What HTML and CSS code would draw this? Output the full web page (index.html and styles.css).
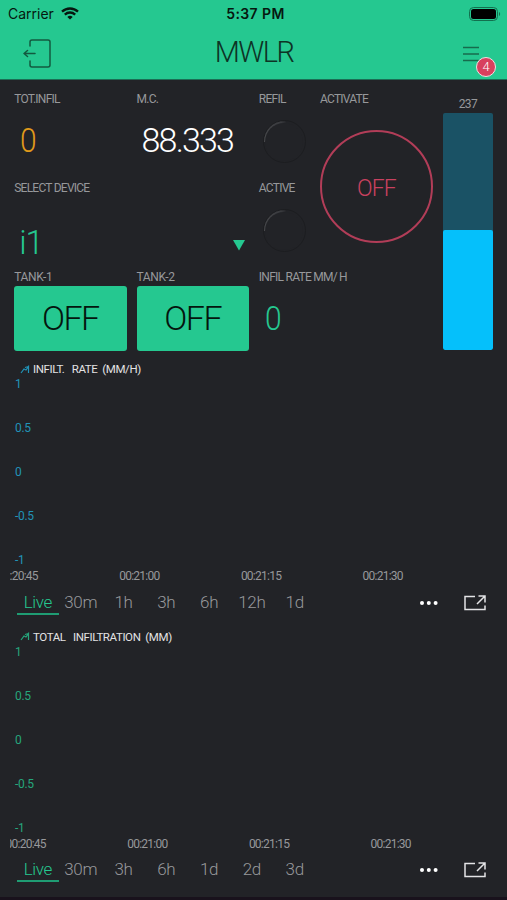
FILE: index.html
```html
<!DOCTYPE html>
<html lang="en">
<head>
    <meta charset="UTF-8">
    <meta name="viewport" content="width=device-width, initial-scale=1.0">
    <title>MWLR</title>
    <link rel="stylesheet" href="styles.css">
</head>
<body>
    <header>
        <div class="status-bar">
            <div class="carrier">
                <span>Carrier</span>
                <svg width="18" height="13" viewBox="0 0 18 13" fill="none" stroke="#06170f" stroke-width="2.3">
                    <path d="M1 4.7C5.5.4 12.5.4 17 4.7"></path>
                    <path d="M3.8 7.6c3-2.8 7.4-2.8 10.4 0"></path>
                    <path d="M6.3 9.9c1.7-1.4 3.7-1.4 5.4 0L9 12.6z" fill="#06170f" stroke="none"></path>
                </svg>
            </div>
            <div class="clock">5:37 PM</div>
            <svg class="battery" width="32" height="14" viewBox="0 0 32 14">
                <rect x=".5" y=".5" width="28" height="13" rx="4" fill="none" stroke="#13704e"></rect>
                <rect x="2" y="2" width="25" height="10" rx="2.5" fill="#000"></rect>
                <path d="M30 5v4c1.5-.5 1.5-3.5 0-4z" fill="#13704e"></path>
            </svg>
        </div>
        <div class="nav-bar">
            <svg class="exit" width="28" height="30" viewBox="0 0 28 30" fill="none" stroke="#13593f" stroke-width="1.5" stroke-linecap="round" stroke-linejoin="round">
                <path d="M7 7V3q0-2 2-2h16q2 0 2 2v23q0 2-2 2H9q-2 0-2-2v-4"></path>
                <path d="M12 14.500H1M4.500 11.500L1 14.500l3.500 3"></path>
            </svg>
            <h1>MWLR</h1>
            <div class="menu">
                <svg width="16" height="16" viewBox="0 0 16 16" stroke="#176b4c" stroke-width="1.6">
                    <path d="M0 1.500h16M0 8h16M0 14.500h16"></path>
                </svg>
                <span class="badge">4</span>
            </div>
        </div>
    </header>

    <main>
        <section class="widgets">
            <div class="widget w2">
                <h2>TOT.INFIL</h2>
                <div class="value orange"><span>0</span></div>
            </div>
            <div class="widget w2">
                <h2>M.C.</h2>
                <div class="value white">88.333</div>
            </div>
            <div class="widget w1">
                <h2>REFIL</h2>
                <div class="led"></div>
            </div>
            <div class="widget w2 tall">
                <h2>ACTIVATE</h2>
                <div class="round-button">OFF</div>
            </div>
            <div class="widget level">
                <div class="level-value">237</div>
                <div class="level-bar"><div class="level-fill"></div></div>
            </div>
            <div class="widget w4">
                <h2>SELECT DEVICE</h2>
                <div class="select">
                    <span>i1</span>
                    <svg width="12" height="11" viewBox="0 0 12 11"><path d="M0 0h12L6 10.500z" fill="#25c890"></path></svg>
                </div>
            </div>
            <div class="widget w1">
                <h2>ACTIVE</h2>
                <div class="led"></div>
            </div>
            <div class="widget w2">
                <h2 class="wide">TANK-1</h2>
                <div class="button">OFF</div>
            </div>
            <div class="widget w2">
                <h2 class="wide">TANK-2</h2>
                <div class="button">OFF</div>
            </div>
            <div class="widget w3">
                <h2>INFIL RATE MM/ H</h2>
                <div class="value green"><span>0</span></div>
            </div>
        </section>

        <section class="chart blue">
            <div class="legend">
                <svg width="10" height="9" viewBox="0 0 10 9" fill="none" stroke="currentColor" stroke-width="1.2"><path d="M1 8l3-4 2 1 2.500-3.500v6.500M5 2.500l3.500-1"></path></svg>
                <span>INFILT. &nbsp; RATE &nbsp;(MM/H)</span>
            </div>
            <div class="y-axis">
                <span>1</span><span>0.5</span><span>0</span><span>-0.5</span><span>-1</span>
            </div>
            <div class="x-axis">
                <span>00:20:45</span><span>00:21:00</span><span>00:21:15</span><span>00:21:30</span>
            </div>
            <div class="toolbar">
                <div class="tabs">
                    <span class="active">Live</span><span>30m</span><span>1h</span><span>3h</span><span>6h</span><span>12h</span><span>1d</span>
                </div>
                <svg class="dots" width="18" height="4" viewBox="0 0 18 4" fill="#fff"><circle cx="2" cy="2" r="2"></circle><circle cx="8.800" cy="2" r="2"></circle><circle cx="15.600" cy="2" r="2"></circle></svg>
                <svg class="expand" width="22" height="16" viewBox="0 0 22 16" fill="none" stroke="#e4e4e6" stroke-width="1.5"><path d="M11 1.500H1v13h20v-4M13 9l7.500-7.500M14.500 1H21v6.500"></path></svg>
            </div>
        </section>

        <section class="chart teal">
            <div class="legend">
                <svg width="10" height="9" viewBox="0 0 10 9" fill="none" stroke="currentColor" stroke-width="1.2"><path d="M1 8l3-4 2 1 2.500-3.500v6.500M5 2.500l3.500-1"></path></svg>
                <span>TOTAL &nbsp; INFILTRATION &nbsp;(MM)</span>
            </div>
            <div class="y-axis">
                <span>1</span><span>0.5</span><span>0</span><span>-0.5</span><span>-1</span>
            </div>
            <div class="x-axis later">
                <span>00:20:45</span><span>00:21:00</span><span>00:21:15</span><span>00:21:30</span>
            </div>
            <div class="toolbar">
                <div class="tabs">
                    <span class="active">Live</span><span>30m</span><span>3h</span><span>6h</span><span>1d</span><span>2d</span><span>3d</span>
                </div>
                <svg class="dots" width="18" height="4" viewBox="0 0 18 4" fill="#fff"><circle cx="2" cy="2" r="2"></circle><circle cx="8.800" cy="2" r="2"></circle><circle cx="15.600" cy="2" r="2"></circle></svg>
                <svg class="expand" width="22" height="16" viewBox="0 0 22 16" fill="none" stroke="#e4e4e6" stroke-width="1.5"><path d="M11 1.500H1v13h20v-4M13 9l7.500-7.500M14.500 1H21v6.500"></path></svg>
            </div>
        </section>
    </main>
</body>
</html>
```
FILE: styles.css
```css
:root {
    --green: #25c890;
    --bg: #222327;
    --label: #97989b;
    --red: #c8415f;
}

* {
    margin: 0;
    padding: 0;
    box-sizing: border-box;
}

body {
    font-family: Roboto, sans-serif;
    font-weight: 300;
    background: var(--bg);
    color: var(--label);
    height: 900px;
    overflow: hidden;
    border-bottom: 3px solid #19121c;
}

svg {
    display: block;
    flex: none;
}

header {
    height: 80px;
    background: var(--green);
    border-bottom: 1px solid #1b6f55;
}

.status-bar {
    height: 27px;
    display: grid;
    grid-template-columns: 1fr auto 1fr;
    align-items: center;
    padding: 0 6px 0 8px;
    font-family: Inter, sans-serif;
    color: #06170f;
}

.carrier {
    display: flex;
    align-items: center;
    gap: 7px;
    font-size: 14px;
    font-weight: 400;
}

.clock {
    font-size: 14px;
    font-weight: 600;
    letter-spacing: 0.4px;
    padding-left: 2px;
}

.battery {
    justify-self: end;
}

.nav-bar {
    height: 52px;
    display: grid;
    grid-template-columns: 1fr auto 1fr;
    align-items: center;
    padding: 2px 28px 0 23px;
}

h1 {
    font-size: 29px;
    line-height: 34px;
    font-weight: 300;
    letter-spacing: -1.6px;
    color: #0d3325;
    padding: 0 0 4px 6px;
}

.menu {
    justify-self: end;
    position: relative;
}

.badge {
    position: absolute;
    left: 13px;
    top: 11px;
    width: 20px;
    height: 20px;
    border: 1.5px solid #f2dfe3;
    border-radius: 50%;
    background: #d8405e;
    color: #fff;
    font-size: 13px;
    line-height: 18px;
    text-align: center;
}

.widgets {
    display: grid;
    grid-template-columns: repeat(8, 1fr);
    grid-template-rows: 77px 77px 81px;
    gap: 12px 10px;
    padding: 11px 13.5px 0 14.2px;
}

.w1 { grid-column: span 1; }
.w2 { grid-column: span 2; }
.w3 { grid-column: span 3; }
.w4 { grid-column: span 4; }

.widget {
    min-width: 0;
    display: flex;
    flex-direction: column;
    white-space: nowrap;
}

.tall {
    grid-row: span 2;
}

.level {
    grid-column: 8;
    grid-row: 1 / span 3;
    padding: 0 1px;
}

h2 {
    font-size: 12px;
    line-height: 16px;
    font-weight: 400;
    letter-spacing: -0.75px;
}

h2.wide {
    letter-spacing: -0.35px;
}

.value {
    font-size: 34px;
    line-height: 40px;
    padding: 13px 0 0 5px;
    letter-spacing: -1.8px;
}

/* single digits are drawn condensed */
.value span {
    display: inline-block;
    transform: scaleX(0.88);
}

.orange { color: #e09a1b; }
.white { color: #fff; }
.green { color: var(--green); }

.led {
    width: 43px;
    height: 43px;
    margin: 13px 0 0 4px;
    border-radius: 50%;
    border: 1px solid #1c1d20;
    background: conic-gradient(from 270deg, #48494c, #3a3b3f 80deg, transparent 95deg);
    display: grid;
    place-items: center;
}

.led::before {
    content: "";
    width: 38px;
    height: 38px;
    border-radius: 50%;
    background: var(--bg);
}

.round-button {
    width: 113px;
    height: 113px;
    margin-top: 23px;
    border: 2px solid #b23d58;
    border-radius: 50%;
    color: var(--red);
    font-size: 23px;
    line-height: 114px;
    text-align: center;
    letter-spacing: -0.9px;
}

.level-value {
    font-size: 12px;
    line-height: 14px;
    font-weight: 400;
    letter-spacing: -0.6px;
    padding: 6px 0 2px;
    text-align: center;
}

.level-bar {
    flex: 1;
    display: flex;
    align-items: flex-end;
    background: #1a5265;
    border-radius: 2px;
    overflow: hidden;
}

.level-fill {
    width: 100%;
    height: 50.5%;
    background: #05c0fb;
    border-radius: 2px;
}

.select {
    display: flex;
    align-items: center;
    justify-content: space-between;
    padding: 28px 4px 0 5px;
    color: var(--green);
    font-size: 33px;
    line-height: 38px;
}

.select span {
    letter-spacing: -1px;
}

.select svg {
    margin-top: 5px;
}

.button {
    flex: 1;
    margin-top: 1px;
    background: var(--green);
    border-radius: 3px;
    color: #04150e;
    font-size: 34px;
    line-height: 65px;
    text-align: center;
    letter-spacing: -1.5px;
}

.chart {
    height: 267.5px;
    padding: 11px 0 0 10px;
}

.blue { color: #2193b8; }
.teal { color: #26a67c; }

.legend {
    display: flex;
    align-items: center;
    gap: 3px;
    height: 16px;
    padding-left: 10px;
}

.legend span {
    color: #e2e2e3;
    font-size: 11.5px;
    font-weight: 400;
    letter-spacing: -0.4px;
}

.y-axis {
    height: 190px;
    display: flex;
    flex-direction: column;
    justify-content: space-between;
    padding-left: 5px;
    font-size: 12px;
    line-height: 14px;
    font-weight: 400;
    letter-spacing: -0.3px;
}

.x-axis {
    display: flex;
    gap: 80.7px;
    overflow: hidden;
    color: var(--label);
    font-size: 12px;
    line-height: 18px;
    font-weight: 400;
    letter-spacing: -0.75px;
}

.x-axis span {
    flex: none;
    width: 41px;
    white-space: nowrap;
}

.x-axis span:first-child {
    margin-left: -12.5px;
}

.x-axis.later span:first-child {
    margin-left: -4.5px;
}

.toolbar {
    display: flex;
    align-items: center;
    height: 32px;
    padding: 0 21px 0 6.5px;
}

.tabs {
    display: flex;
    flex: 1;
    color: var(--label);
    font-size: 17px;
    line-height: 22px;
    letter-spacing: -0.3px;
    padding-top: 3px;
}

.tabs span {
    width: 42.8px;
    text-align: center;
    border-bottom: 2px solid transparent;
}

.tabs .active {
    color: var(--green);
    border-color: #1f9c73;
}

.dots {
    margin: 3px 26px 0 0;
}

.expand {
    margin-top: 3px;
}
```
